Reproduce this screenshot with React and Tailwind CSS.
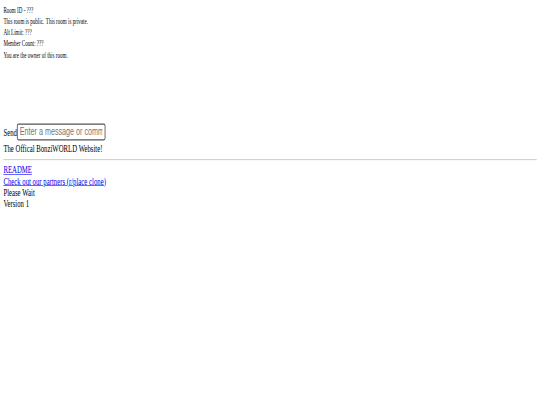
import { useState } from 'react'

function App() {
  const [message, setMessage] = useState('')

  return (
    <div className="w-[540px] h-[405px] overflow-hidden bg-white">
      {/* page drawn at 1280x675 and squeezed into the window */}
      <div className="w-[1280px] h-[675px] origin-top-left scale-x-[0.421875] scale-y-[0.6] p-[8px] font-['Liberation_Serif',serif] text-[16px] leading-[18.4px] text-black">
        <div><span className="text-[12px] leading-none">Room ID - ???</span></div>
        <div>
          <span className="text-[12px] leading-none">This room is public.</span>{' '}
          <span className="text-[12px] leading-none">This room is private.</span>
        </div>
        <div><span className="text-[12px] leading-none">Alt Limit: ???</span></div>
        <div><span className="text-[12px] leading-none">Member Count: ???</span></div>
        <div><span className="text-[12px] leading-none">You are the owner of this room.</span></div>

        {/* chat log (empty) */}
        <div className="h-[106px]"></div>

        <form
          className="flex items-start h-[33px]"
          onSubmit={(e) => { e.preventDefault(); setMessage('') }}
        >
          <span className="mt-[6px]">Send</span>
          <input
            value={message}
            onChange={(e) => setMessage(e.target.value)}
            placeholder="Enter a message or command..."
            className="w-[210px] h-[28px] border-2 border-[#555555] rounded-[4px] px-[5px] font-['Liberation_Sans',sans-serif] text-[17px] placeholder:text-[#757575] outline-none"
          />
        </form>

        <div>The Offical BonziWORLD Website!</div>
        <hr className="my-[8px] h-0 border-t border-b border-t-[#a8a8a8] border-b-[#dddddd]" />

        <div className="mt-[1px]"><a href="#" className="text-[#0000ee] underline">README</a></div>
        <div><a href="#" className="text-[#0000ee] underline">Check out our partners (r/place clone)</a></div>
        <div>Please Wait</div>
        <div>Version 1</div>
      </div>
    </div>
  )
}

export default App
